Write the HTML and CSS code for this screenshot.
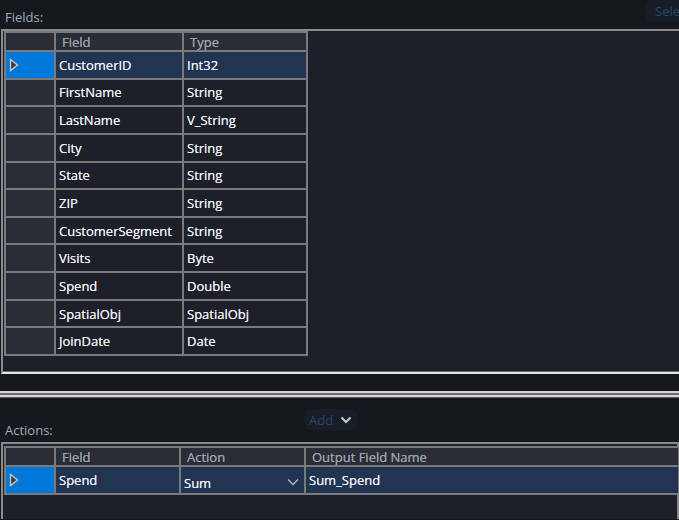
FILE: index.html
```html
<!DOCTYPE html>
<html lang="en">
<head>
    <meta charset="UTF-8">
    <title>Summarize</title>
    <link rel="stylesheet" href="styles.css">
</head>
<body>
    <div class="panel">
        <div class="topbar">
            <span class="label">Fields:</span>
            <button class="dim-button select-button">Select</button>
        </div>

        <div class="grid-box fields-box">
            <table class="grid fields-grid">
                <colgroup>
                    <col class="col-row">
                    <col class="col-field">
                    <col class="col-type">
                </colgroup>
                <tr class="head">
                    <th class="row-head"></th>
                    <th>Field</th>
                    <th>Type</th>
                </tr>
                <tr class="selected">
                    <td class="row-head">
                        <svg class="pointer" width="10" height="14" viewBox="0 0 10 14"><polygon points="1.5,1.5 8.5,7 1.5,12.5" /></svg>
                    </td>
                    <td>CustomerID</td>
                    <td>Int32</td>
                </tr>
                <tr><td class="row-head"></td><td>FirstName</td><td>String</td></tr>
                <tr><td class="row-head"></td><td>LastName</td><td>V_String</td></tr>
                <tr><td class="row-head"></td><td>City</td><td>String</td></tr>
                <tr><td class="row-head"></td><td>State</td><td>String</td></tr>
                <tr><td class="row-head"></td><td>ZIP</td><td>String</td></tr>
                <tr><td class="row-head"></td><td>CustomerSegment</td><td>String</td></tr>
                <tr><td class="row-head"></td><td>Visits</td><td>Byte</td></tr>
                <tr><td class="row-head"></td><td>Spend</td><td>Double</td></tr>
                <tr><td class="row-head"></td><td>SpatialObj</td><td>SpatialObj</td></tr>
                <tr><td class="row-head"></td><td>JoinDate</td><td>Date</td></tr>
            </table>
        </div>

        <div class="splitter"></div>

        <div class="actions-bar">
            <span class="label">Actions:</span>
            <button class="dim-button add-button">Add
                <svg width="12" height="8" viewBox="0 0 12 8"><polyline points="1.5,1.5 6,6 10.5,1.5" /></svg>
            </button>
        </div>

        <div class="grid-box actions-box">
            <table class="grid actions-grid">
                <colgroup>
                    <col class="col-row">
                    <col class="col-afield">
                    <col class="col-action">
                    <col>
                </colgroup>
                <tr class="head">
                    <th class="row-head"></th>
                    <th>Field</th>
                    <th>Action</th>
                    <th>Output Field Name</th>
                </tr>
                <tr class="selected">
                    <td class="row-head">
                        <svg class="pointer" width="10" height="14" viewBox="0 0 10 14"><polygon points="1.5,1.5 8.5,7 1.5,12.5" /></svg>
                    </td>
                    <td>Spend</td>
                    <td class="combo">
                        <span>Sum</span>
                        <svg width="12" height="8" viewBox="0 0 12 8"><polyline points="1,1.5 6,6.5 11,1.5" /></svg>
                    </td>
                    <td>Sum_Spend</td>
                </tr>
            </table>
        </div>
    </div>
</body>
</html>
```

FILE: styles.css
```css
body {
    margin: 0;
    background-color: #15181d;
    font-family: 'Open Sans', 'Noto Sans', sans-serif;
    font-size: 13px;
    color: #eceef2;
    overflow: hidden;
}

.panel {
    width: 679px;
    height: 520px;
    overflow: hidden;
}

.label {
    color: #a3abb7;
    padding-left: 5px;
}

.topbar {
    height: 29px;
    display: flex;
    justify-content: space-between;
    align-items: flex-end;
}

.topbar .label {
    padding-bottom: 3px;
}

.dim-button {
    font-family: inherit;
    font-size: 13px;
    border: none;
    border-radius: 5px;
    background-color: #171e28;
    color: #2b4569;
    padding: 0 6px;
    cursor: pointer;
}

.select-button {
    align-self: flex-start;
    height: 21px;
    width: 60px;
    margin-right: -27px;
    padding-left: 9px;
    text-align: left;
}

.grid-box {
    margin-left: 1px;
    border-top: 2px solid #8a8a8a;
    border-left: 2px solid #8a8a8a;
    background-color: #1e2029;
    padding-left: 1px;
}

.fields-box {
    height: 341px;
    border-bottom: 2px solid #e4e4e4;
    box-shadow: inset 0 -1px 0 #6c6c6c;
}

.actions-box {
    height: 73px;
    padding-top: 2px;
    border-right: 2px solid #8a8a8a;
}

.grid {
    border-collapse: collapse;
    table-layout: fixed;
}

.grid th,
.grid td {
    border: 2px solid #7a7a7a;
    padding: 0 0 0 3px;
    text-align: left;
    white-space: nowrap;
    overflow: hidden;
    background-color: #1e2029;
    text-shadow: 0 0 0.4px currentColor;
}

.grid th {
    height: 17px;
    font-weight: normal;
    color: #9aa2ad;
    background-color: #2a2d35;
    padding-left: 6px;
    line-height: 16px;
}

.grid td {
    height: 25.65px;
}

.grid .row-head {
    background-color: #2a2d35;
    padding: 0;
}

.selected td {
    background-color: #213552;
}

.selected td.row-head {
    background-color: #0078d7;
}

.pointer {
    display: block;
    margin-left: 3px;
}

.pointer polygon {
    fill: #3a3a3c;
    stroke: #c8c8c8;
    stroke-width: 1.4;
}

.fields-grid {
    width: 302px;
}

.col-row {
    width: 50px;
}

.col-field {
    width: 128px;
}

.col-type {
    width: 124px;
}

.col-afield {
    width: 125px;
}

.col-action {
    width: 125px;
}

.splitter {
    margin-top: 17px;
    height: 2px;
    border-top: 2px solid #d4d4d4;
    border-bottom: 2px solid #d4d4d4;
    background-color: #6a6a6a;
    box-shadow: 0 1px 0 #5a5a5a;
}

.actions-bar {
    height: 45px;
    display: grid;
    grid-template-columns: 305px auto;
    align-items: end;
}

.actions-bar .label {
    padding-bottom: 3px;
}

.add-button {
    align-self: start;
    justify-self: start;
    margin-top: 12px;
    height: 21px;
    display: flex;
    align-items: center;
    gap: 7px;
    padding: 0 5px 0 4px;
}

.add-button polyline {
    fill: none;
    stroke: #c5ccd5;
    stroke-width: 2;
}

.actions-grid {
    width: 676px;
}

.actions-grid th {
    height: 17px;
}

.actions-grid td {
    height: 26px;
}

.combo span {
    display: inline-block;
    padding-top: 5px;
}

.combo svg {
    float: right;
    margin: 9px 5px 0 0;
}

.combo polyline {
    fill: none;
    stroke: #b8bec6;
    stroke-width: 1.3;
}
```
